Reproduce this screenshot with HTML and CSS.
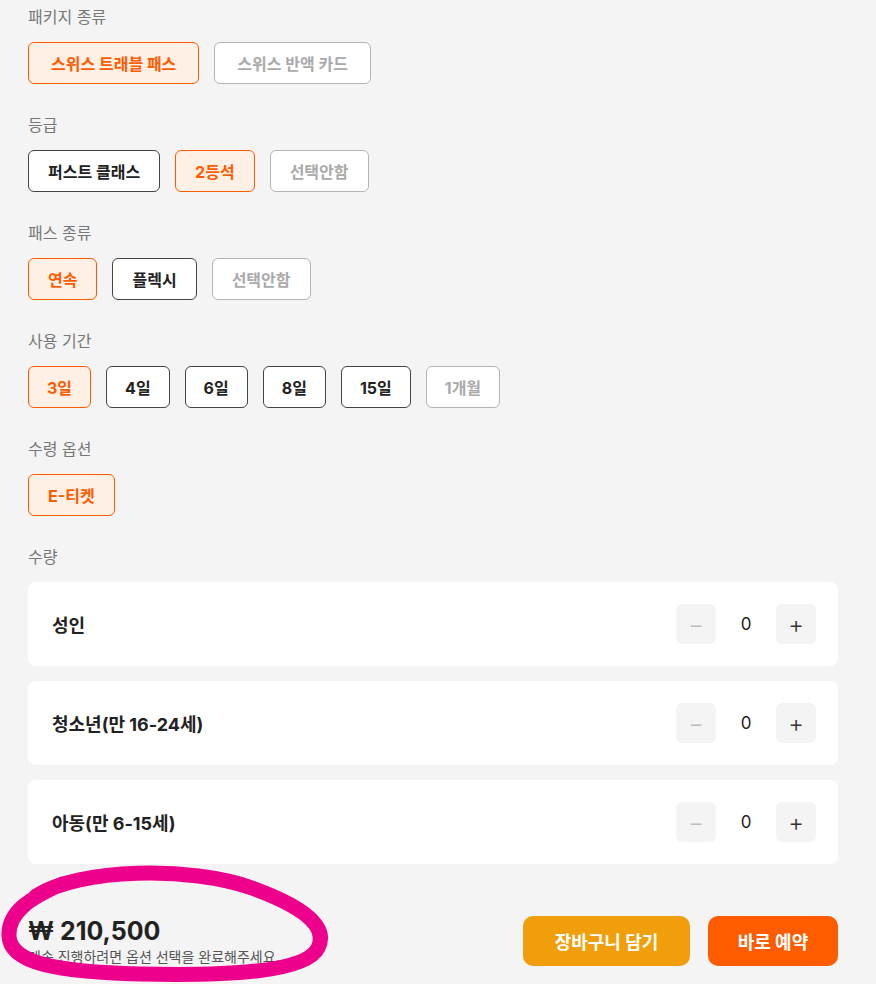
FILE: index.html
```html
<!DOCTYPE html>
<html lang="ko">
<head>
    <meta charset="UTF-8">
    <meta name="viewport" content="width=device-width, initial-scale=1.0">
    <title>스위스 트래블 패스 옵션</title>
    <link rel="stylesheet" href="styles.css">
</head>
<body>
    <div class="options">
        <div class="group">
            <div class="label">패키지 종류</div>
            <div class="chips">
                <button class="chip wide active">스위스 트래블 패스</button>
                <button class="chip wide off">스위스 반액 카드</button>
            </div>
        </div>

        <div class="group">
            <div class="label">등급</div>
            <div class="chips">
                <button class="chip">퍼스트 클래스</button>
                <button class="chip active">2등석</button>
                <button class="chip off">선택안함</button>
            </div>
        </div>

        <div class="group">
            <div class="label">패스 종류</div>
            <div class="chips">
                <button class="chip active">연속</button>
                <button class="chip">플렉시</button>
                <button class="chip off">선택안함</button>
            </div>
        </div>

        <div class="group">
            <div class="label">사용 기간</div>
            <div class="chips">
                <button class="chip num active">3일</button>
                <button class="chip num">4일</button>
                <button class="chip num">6일</button>
                <button class="chip num">8일</button>
                <button class="chip num">15일</button>
                <button class="chip num off">1개월</button>
            </div>
        </div>

        <div class="group">
            <div class="label">수령 옵션</div>
            <div class="chips">
                <button class="chip active">E-티켓</button>
            </div>
        </div>

        <div class="group">
            <div class="label">수량</div>
            <div class="counters">
                <div class="counter">
                    <span class="name">성인</span>
                    <div class="stepper">
                        <button class="step minus">&minus;</button>
                        <span class="count">0</span>
                        <button class="step">+</button>
                    </div>
                </div>
                <div class="counter">
                    <span class="name">청소년(만 16-24세)</span>
                    <div class="stepper">
                        <button class="step minus">&minus;</button>
                        <span class="count">0</span>
                        <button class="step">+</button>
                    </div>
                </div>
                <div class="counter">
                    <span class="name">아동(만 6-15세)</span>
                    <div class="stepper">
                        <button class="step minus">&minus;</button>
                        <span class="count">0</span>
                        <button class="step">+</button>
                    </div>
                </div>
            </div>
        </div>
    </div>

    <div class="footer">
        <div class="total">
            <div class="price">₩ 210,500</div>
            <div class="hint">계속 진행하려면 옵션 선택을 완료해주세요.</div>
        </div>
        <div class="actions">
            <button class="btn cart">장바구니 담기</button>
            <button class="btn book">바로 예약</button>
        </div>
    </div>

    <!-- highlight scribble -->
    <svg class="mark" width="340" height="124" viewBox="0 0 340 124">
        <path d="M 36 36 C 80 8, 190 6, 252 28 C 296 44, 330 64, 318 88 C 306 112, 230 116, 140 114 C 60 112, 10 104, 9 76 C 8 52, 30 38, 62 24"
              fill="none" stroke="#ec008c" stroke-width="15" stroke-linecap="round" stroke-linejoin="round"/>
    </svg>
</body>
</html>
```

FILE: styles.css
```css
body {
    margin: 0;
    background-color: #f4f4f4;
    font-family: Inter, "Noto Sans CJK KR", sans-serif;
    color: #222;
    position: relative;
    height: 984px;
    overflow: hidden;
}

.options {
    padding: 6px 38px 0 28px;
}

.group {
    margin-bottom: 30px;
}

.label {
    font-size: 16px;
    line-height: 22px;
    color: #777;
    margin-bottom: 14px;
}

.chips {
    display: flex;
    gap: 15px;
}

.chip {
    height: 42px;
    padding: 0 19px;
    border: 1px solid #444;
    border-radius: 6px;
    background-color: #fff;
    color: #222;
    font-family: inherit;
    font-size: 16px;
    font-weight: 700;
}

.chip.wide {
    padding: 0 22px;
}

.chip.num {
    padding: 0 18px;
}

.chip.active {
    border-color: #ff5c00;
    background-color: #fff0e6;
    color: #ff5c00;
}

.chip.off {
    border-color: #b4b4b4;
    color: #aaa;
}

.counters {
    display: flex;
    flex-direction: column;
    gap: 15px;
}

.counter {
    display: flex;
    justify-content: space-between;
    align-items: center;
    height: 84px;
    padding: 0 22px 0 24px;
    background-color: #fff;
    border-radius: 8px;
}

.name {
    font-size: 18px;
    font-weight: 700;
}

.stepper {
    display: flex;
    align-items: center;
}

.step {
    width: 40px;
    height: 40px;
    border: none;
    border-radius: 6px;
    background-color: #f4f4f4;
    color: #333;
    font-family: inherit;
    font-size: 24px;
    font-weight: 300;
    padding: 0;
}

.step.minus {
    color: #bbb;
}

.count {
    width: 60px;
    text-align: center;
    font-size: 17px;
}

.footer {
    display: flex;
    justify-content: space-between;
    align-items: center;
    margin-top: 52px;
    padding: 0 38px 0 28px;
}

.price {
    font-size: 25px;
    font-weight: 700;
    line-height: 30px;
}

.hint {
    font-size: 14px;
    color: #555;
    margin-top: 0;
}

.actions {
    display: flex;
    gap: 18px;
}

.btn {
    height: 50px;
    border: none;
    border-radius: 10px;
    color: #fff;
    font-family: inherit;
    font-size: 18px;
    font-weight: 700;
}

.cart {
    width: 167px;
    background-color: #f09e0c;
}

.book {
    width: 130px;
    background-color: #ff5c00;
}

.mark {
    position: absolute;
    left: 0;
    top: 860px;
    pointer-events: none;
}
```
